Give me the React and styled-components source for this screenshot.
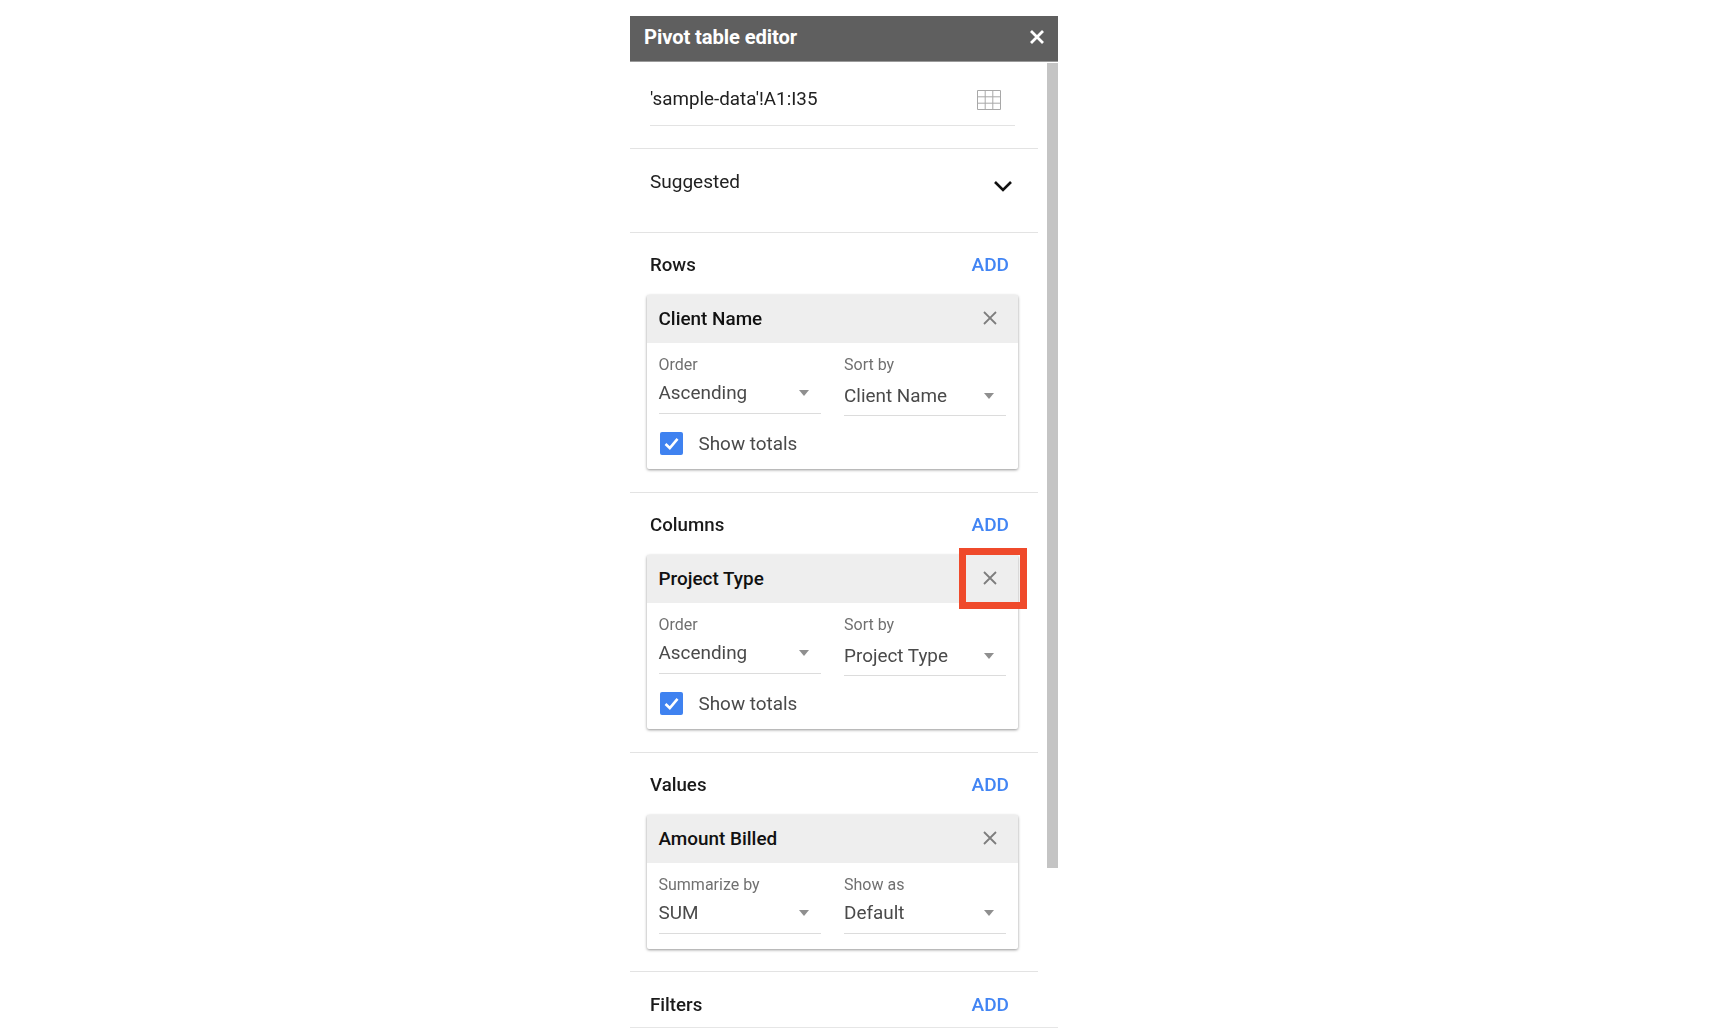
import React from "react";
import styled, { createGlobalStyle } from "styled-components";

const Global = createGlobalStyle`
  html, body { margin: 0; padding: 0; background: #fff; }
  body { font-family: Roboto, "Liberation Sans", sans-serif; color: #212121; }
`;

const Page = styled.div`
  width: 1718px;
  height: 1036px;
  overflow: hidden;
  padding: 16px 0 0 630px;
  box-sizing: border-box;
`;
const Panel = styled.div`
  width: 428px;
  filter: blur(0.55px);
`;
const Header = styled.header`
  height: 46px;
  background: #5f5f5f;
  color: #fff;
  display: flex;
  align-items: center;
  justify-content: space-between;
  padding: 0 13px 3px 14px;
  border-bottom: 1px solid #9a9a9a;
  box-sizing: border-box;
  font-weight: 700;
  font-size: 20.2px;
  letter-spacing: -0.1px;
`;
const CloseBtn = styled.svg`
  width: 16px;
  height: 16px;
  display: block;
`;
const Body = styled.div`
  display: flex;
  height: 965px;
  border-bottom: 1px solid #e6e6e6;
`;
const Content = styled.div`
  width: 408px;
  flex: none;
`;
const ScrollGutter = styled.div`
  margin-left: 9px;
  padding-top: 1px;
`;
const ScrollThumb = styled.div`
  width: 11px;
  height: 805px;
  background: #c4c4c4;
`;
const RangeSection = styled.section`
  height: 86.5px;
  box-sizing: border-box;
  padding: 0 23px 0 20px;
  border-bottom: 1px solid #e3e3e3;
`;
const RangeInput = styled.div`
  height: 63.5px;
  box-sizing: border-box;
  border-bottom: 1px solid #e3e3e3;
  display: flex;
  align-items: center;
  justify-content: space-between;
  padding: 11px 14px 0 0;
  font-size: 18.8px;
  & > svg {
    margin-top: 3px;
  }
`;
const SuggestedSection = styled.section`
  height: 84px;
  box-sizing: border-box;
  padding: 21px 23px 0 20px;
  border-bottom: 1px solid #e3e3e3;
  display: flex;
  justify-content: space-between;
  align-items: flex-start;
  font-size: 19px;
`;
const Chevron = styled.svg`
  width: 20px;
  height: 12px;
  margin: 10px 2px 0 0;
`;
const Section = styled.section`
  box-sizing: border-box;
  height: ${p => p.$h}px;
  padding: 20px 20px 0 16.5px;
  border-bottom: ${p => (p.$last ? "none" : "1px solid #e3e3e3")};
`;
const SectionHead = styled.div`
  display: flex;
  justify-content: space-between;
  align-items: center;
  height: 25px;
  padding: 0 9px 0 3.5px;
  margin-bottom: 17.5px;
`;
const SectionTitle = styled.span`
  font-weight: 500;
  font-size: 18.7px;
  color: #1a1a1a;
`;
const AddLink = styled.a`
  font-weight: 500;
  font-size: 19px;
  color: #4285f4;
  margin-bottom: 1px;
`;
const Card = styled.div`
  width: 371.5px;
  border-radius: 2px;
  background: #fff;
  box-shadow: 0 1px 3px rgba(0, 0, 0, 0.42);
`;
const CardHead = styled.div`
  position: relative;
  height: 48px;
  box-sizing: border-box;
  background: #eeeeee;
  display: flex;
  align-items: center;
  justify-content: space-between;
  padding: 0 19px 2px 12px;
  font-weight: 500;
  font-size: 18.9px;
  color: #111;
`;
const RemoveIcon = styled.svg`
  width: 18px;
  height: 18px;
  display: block;
`;
const Highlight = styled.div`
  position: absolute;
  left: 312px;
  top: -7px;
  width: 68px;
  height: 61px;
  box-sizing: border-box;
  border: 7px solid #ef4a2b;
`;
const CardBody = styled.div`
  padding: 12px 12px ${p => (p.$compact ? 15 : 0)}px;
`;
const Fields = styled.div`
  display: grid;
  grid-template-columns: 162px 162px;
  column-gap: 23.5px;
`;
const FieldLabel = styled.div`
  font-size: 16px;
  line-height: 20px;
  color: #707070;
`;
const FieldValue = styled.div`
  height: ${p => (p.$low ? 41 : 39)}px;
  box-sizing: border-box;
  border-bottom: 1px solid #dcdcdc;
  display: flex;
  justify-content: space-between;
  padding: ${p => (p.$low ? 11 : 8)}px 12px 0 0;
  font-size: 18.9px;
  line-height: 20px;
  color: #4a4a4a;
`;
const Caret = styled.span`
  width: 0;
  height: 0;
  margin-top: 7px;
  border-left: 5.5px solid transparent;
  border-right: 5.5px solid transparent;
  border-top: 6px solid #8f8f8f;
`;
const CheckRow = styled.label`
  display: flex;
  align-items: center;
  height: 52px;
  padding-left: 1px;
  font-size: 18.9px;
  color: #4a4a4a;
  margin-top: 1px;
`;
const CheckBox = styled.span`
  width: 23px;
  height: 23px;
  border-radius: 2px;
  background: #3f82f0;
  margin-right: 16px;
  display: flex;
  align-items: center;
  justify-content: center;
`;

const CloseX = () => (
  <CloseBtn viewBox="0 0 16 16">
    <path d="M2 2 L14 14 M14 2 L2 14" stroke="#fff" strokeWidth="2.8" />
  </CloseBtn>
);
const RemoveX = () => (
  <RemoveIcon viewBox="0 0 18 18">
    <path d="M3 3 L15 15 M15 3 L3 15" stroke="#7d7d7d" strokeWidth="1.8" />
  </RemoveIcon>
);

function Item({ name, left, right, totals, highlight }) {
  return (
    <Card>
      <CardHead>
        <span>{name}</span>
        <RemoveX />
        {highlight && <Highlight />}
      </CardHead>
      <CardBody $compact={!totals}>
        <Fields>
          <div>
            <FieldLabel>{left[0]}</FieldLabel>
            <FieldValue>
              <span>{left[1]}</span>
              <Caret />
            </FieldValue>
          </div>
          <div>
            <FieldLabel>{right[0]}</FieldLabel>
            <FieldValue $low={totals}>
              <span>{right[1]}</span>
              <Caret />
            </FieldValue>
          </div>
        </Fields>
        {totals && (
          <CheckRow>
            <CheckBox>
              <svg width="17" height="17" viewBox="0 0 17 17">
                <path d="M2.5 9 L6.8 13 L14.5 3.8" fill="none" stroke="#fff" strokeWidth="2.6" />
              </svg>
            </CheckBox>
            Show totals
          </CheckRow>
        )}
      </CardBody>
    </Card>
  );
}

export default function App() {
  return (
    <Page>
      <Global />
      <Panel>
        <Header>
          <span>Pivot table editor</span>
          <CloseX />
        </Header>
        <Body>
          <Content>
            <RangeSection>
              <RangeInput>
                <span>'sample-data'!A1:I35</span>
                <svg width="24" height="20" viewBox="0 0 24 20">
                  <path
                    d="M.5 .5H23.5V19.5H.5Z M.5 6.8H23.5 M.5 13.2H23.5 M8.2 .5V19.5 M15.8 .5V19.5"
                    fill="none"
                    stroke="#a8a8a8"
                    strokeWidth="1"
                  />
                </svg>
              </RangeInput>
            </RangeSection>
            <SuggestedSection>
              <span>Suggested</span>
              <Chevron viewBox="0 0 20 12">
                <path d="M2 2 L10 10 L18 2" fill="none" stroke="#111" strokeWidth="2.6" />
              </Chevron>
            </SuggestedSection>
            <Section $h={260}>
              <SectionHead>
                <SectionTitle>Rows</SectionTitle>
                <AddLink>ADD</AddLink>
              </SectionHead>
              <Item name="Client Name" left={["Order", "Ascending"]} right={["Sort by", "Client Name"]} totals />
            </Section>
            <Section $h={260}>
              <SectionHead>
                <SectionTitle>Columns</SectionTitle>
                <AddLink>ADD</AddLink>
              </SectionHead>
              <Item name="Project Type" left={["Order", "Ascending"]} right={["Sort by", "Project Type"]} totals highlight />
            </Section>
            <Section $h={219.5}>
              <SectionHead>
                <SectionTitle>Values</SectionTitle>
                <AddLink>ADD</AddLink>
              </SectionHead>
              <Item name="Amount Billed" left={["Summarize by", "SUM"]} right={["Show as", "Default"]} />
            </Section>
            <Section $h={54} $last>
              <SectionHead>
                <SectionTitle>Filters</SectionTitle>
                <AddLink>ADD</AddLink>
              </SectionHead>
            </Section>
          </Content>
          <ScrollGutter>
            <ScrollThumb />
          </ScrollGutter>
        </Body>
      </Panel>
    </Page>
  );
}
